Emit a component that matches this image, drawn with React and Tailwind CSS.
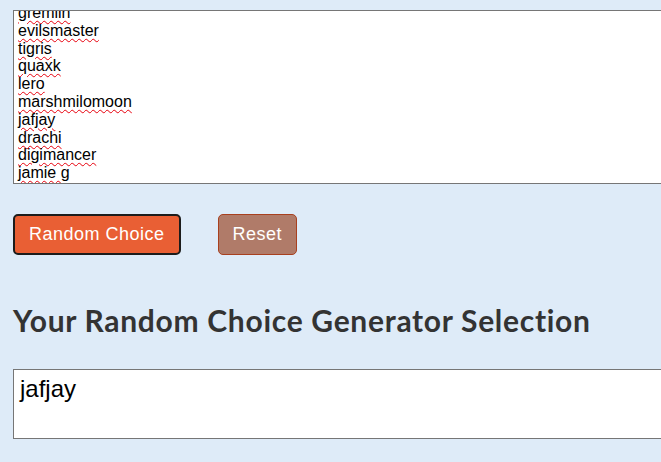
import React from "react";

const names = [
  "gremlin",
  "evilsmaster",
  "tigris",
  "quaxk",
  "lero",
  "marshmilomoon",
  "jafjay",
  "drachi",
  "digimancer",
  "jamie g",
];

export default function App() {
  return (
    <div className="min-h-[462px] w-full overflow-hidden bg-[#deebf8] pl-[13px] pt-[10px] font-['Liberation_Sans',Arial,sans-serif]">
      {/* scrolled list of entries */}
      <div className="h-[174px] w-[700px] overflow-hidden border border-[#767676] bg-white pl-[4px]">
        <div className="-mt-[7px] text-[16px] leading-[17.8px] text-black">
          {names.map((name) => (
            <div key={name}>
              <span className="underline decoration-red-600 decoration-wavy decoration-1 underline-offset-[2px]">
                {name}
              </span>
            </div>
          ))}
        </div>
      </div>

      <div className="mt-[30px] flex gap-[37px]">
        <button className="h-[41px] rounded-[5px] border-2 border-[#1c1c1c] bg-[#e95f34] px-[14px] text-[18px] tracking-[0.5px] text-white">
          Random Choice
        </button>
        <button className="h-[41px] rounded-[5px] border border-[#a8401f] bg-[#b07b69] px-[14px] text-[18px] tracking-[0.5px] text-white">
          Reset
        </button>
      </div>

      <h2 className="mt-[47px] font-['Lato',sans-serif] text-[30px] font-bold leading-[36px] tracking-[0.7px] text-[#333333]">
        Your Random Choice Generator Selection
      </h2>

      <div className="mt-[31px] h-[70px] w-[700px] border border-[#767676] bg-white pl-[6px] pt-[5px] text-[24px] leading-[28px] text-black">
        jafjay
      </div>
    </div>
  );
}
